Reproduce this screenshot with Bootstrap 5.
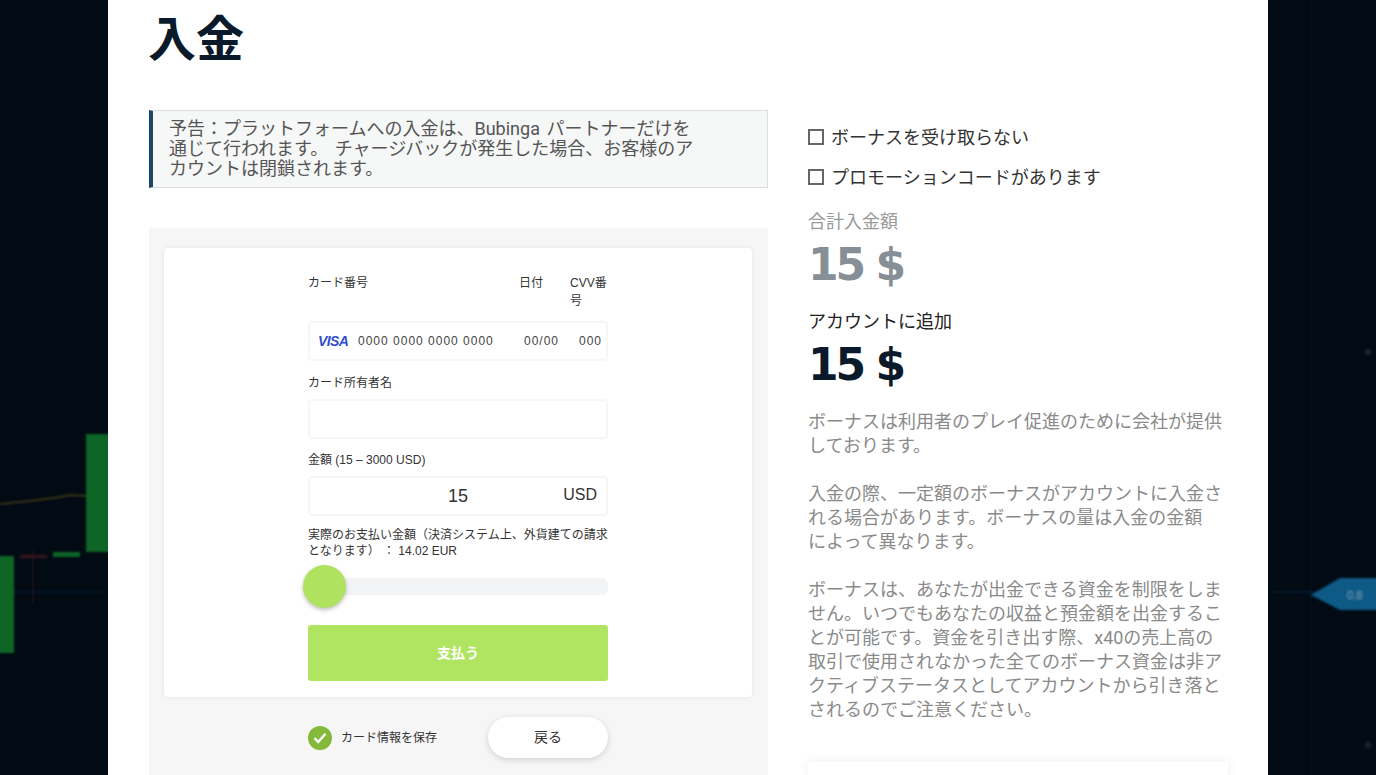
<!DOCTYPE html>
<html lang="ja">

<head>
  <meta charset="UTF-8">
  <title>入金</title>
  <link href="https://cdn.jsdelivr.net/npm/bootstrap@5.3.0/dist/css/bootstrap.min.css" rel="stylesheet">
  <style>
    html,
    body {
      height: 775px;
      overflow: hidden;
      background: #020a14;
      font-family: Roboto, "Noto Sans CJK JP", sans-serif;
    }

    .chart-bg {
      position: absolute;
      inset: 0;
      width: 1376px;
      height: 775px;
    }

    .page-panel {
      position: relative;
      width: 1160px;
      height: 775px;
      padding: 10px 40px 0 41px;
      background: #fff;
      overflow: hidden;
    }

    .page-title {
      height: 60px;
      margin: 0 0 40px -1px;
      font-size: 48px;
      line-height: 60px;
      font-weight: 700;
      color: #0b1a2b;
    }

    .left-col {
      width: 619px;
    }

    .right-col {
      width: 420px;
      padding-top: 7px;
    }

    .notice-box {
      height: 78px;
      margin-bottom: 40px;
      padding: 8px 16px 6px;
      background: #f6f7f7;
      border: 1px solid #dcdfe0;
      border-left: 4px solid #1f4468;
      font-size: 18px;
      line-height: 20px;
      word-spacing: 2px;
      color: #555;
    }

    .pay-area {
      height: 547px;
      padding: 20px 16px 0 15px;
      background: #f6f6f6;
    }

    .pay-card {
      height: 449px;
      padding-top: 26px;
      background: #fff;
      border-radius: 4px;
      box-shadow: 0 0 4px rgba(0, 0, 0, .08);
    }

    .pay-form,
    .pay-footer {
      width: 300px;
      margin: 0 auto;
      font-family: "Liberation Sans", "Noto Sans CJK JP", sans-serif;
      font-size: 12px;
      line-height: 18px;
      color: #333;
    }

    .card-labels {
      height: 47px;
    }

    .label-number {
      width: 211px;
    }

    .label-date {
      width: 51px;
    }

    .label-cvv {
      width: 38px;
    }

    .field-box {
      height: 40px;
      background: #fff;
      border: 2px solid #f6f6f6;
      border-radius: 4px;
    }

    .card-field {
      padding-left: 8px;
      letter-spacing: 1px;
      color: #444;
      white-space: nowrap;
    }

    .visa-mark {
      width: 40px;
      font-size: 14px;
      font-weight: 700;
      font-style: italic;
      letter-spacing: -.6px;
      color: #2f50c8;
    }

    .card-digits {
      width: 166px;
    }

    .card-date {
      width: 55px;
    }

    .holder-label {
      margin: 13px 0 7px;
    }

    .amount-label {
      margin: 12px 0 7px;
    }

    .amount-field {
      padding-right: 9px;
      font-size: 16px;
      color: #333;
    }

    .amount-value {
      padding-left: 138px;
      font-size: 18px;
    }

    .amount-unit {
      margin-top: -2px;
    }

    .actual-pay {
      margin-top: 11px;
      line-height: 16px;
    }

    .range-wrap {
      position: relative;
      height: 17px;
      margin: 19px 0 30px;
      background: #f1f3f5;
      border-radius: 6px;
    }

    .range-thumb {
      position: absolute;
      left: -5px;
      top: -13px;
      width: 43px;
      height: 43px;
      border-radius: 50%;
      background: #aee25f;
      box-shadow: 0 2px 4px rgba(0, 0, 0, .25);
    }

    .pay-btn {
      display: block;
      width: 300px;
      height: 56px;
      padding: 0;
      background: #b0e561;
      border: 0;
      border-radius: 3px;
      color: #fff;
      font-size: 14px;
      font-weight: 700;
    }

    .pay-footer {
      height: 41px;
      margin-top: 20px;
    }

    .save-check {
      width: 24px;
      height: 24px;
      margin-right: 9px;
      border-radius: 50%;
      background: #84b93a;
    }

    .back-btn {
      width: 120px;
      height: 41px;
      padding: 0;
      background: #fff;
      border: 0;
      border-radius: 21px;
      box-shadow: 0 2px 6px rgba(0, 0, 0, .15);
      font-size: 14px;
      color: #333;
    }

    .option-row {
      height: 40px;
      font-size: 18px;
      color: #333;
    }

    .option-row .form-check-input {
      width: 16px;
      height: 16px;
      margin: 0 7px 0 0;
      border: 2px solid #666;
      border-radius: 0;
    }

    .sum-label {
      margin-top: 13px;
      font-size: 18px;
      line-height: 24px;
      color: #999;
    }

    .sum-value {
      height: 76px;
      padding-top: 3px;
      font-family: "DejaVu Sans", sans-serif;
      font-size: 44px;
      line-height: 56px;
      font-weight: 700;
      letter-spacing: -3px;
      color: #868e96;
    }

    .sum-label.is-dark {
      margin-top: 0;
      color: #222;
    }

    .sum-value.is-dark {
      color: #0b1a2b;
    }

    .bonus-text {
      margin-bottom: 24px;
      font-size: 18px;
      line-height: 24px;
      color: #8a8a8a;
    }

    .bonus-card {
      height: 13px;
      margin-top: 40px;
      background: #fff;
      box-shadow: 0 0 12px rgba(0, 0, 0, .08);
    }
  </style>
</head>

<body>
  <svg class="chart-bg" viewBox="0 0 1376 775">
    <defs>
      <filter id="soft">
        <feGaussianBlur stdDeviation="1.2"></feGaussianBlur>
      </filter>
    </defs>
    <g filter="url(#soft)">
      <line x1="1311" y1="0" x2="1311" y2="775" stroke="#0b141e" stroke-width="1"></line>
      <line x1="0" y1="592" x2="108" y2="592" stroke="#0c2036" stroke-width="1"></line>
      <line x1="1272" y1="592" x2="1320" y2="592" stroke="#0c2a44" stroke-width="1"></line>
      <polyline points="0,504 30,501 60,497 70,495 108,497" fill="none" stroke="#3a3418" stroke-width="2"></polyline>
      <rect x="86" y="434" width="24" height="118" fill="#0b6528"></rect>
      <rect x="-4" y="556" width="18" height="97" fill="#0b6528"></rect>
      <rect x="53" y="552" width="27" height="5" fill="#0b6528"></rect>
      <rect x="20" y="555" width="27" height="3" fill="#3a161c"></rect>
      <line x1="33" y1="550" x2="33" y2="605" stroke="#2e161c" stroke-width="1"></line>
      <polygon points="1311,595 1340,578 1380,578 1380,610 1340,610" fill="#0b5a86"></polygon>
      <text x="1347" y="599" font-family="Liberation Sans" font-size="11" fill="#6f9cb4">0.8</text>
      <circle cx="1368" cy="352" r="3.5" fill="#17212a"></circle>
      <circle cx="1368" cy="745" r="3.5" fill="#17212a"></circle>
    </g>
  </svg>

  <div class="page-panel mx-auto">
    <h1 class="page-title">入金</h1>
    <div class="d-flex justify-content-between">
      <div class="left-col flex-shrink-0">
        <div class="notice-box">予告：プラットフォームへの入金は、Bubinga パートナーだけを<br>通じて行われます。 チャージバックが発生した場合、お客様のア<br>カウントは閉鎖されます。</div>
        <div class="pay-area">
          <div class="pay-card">
            <div class="pay-form">
              <div class="card-labels d-flex">
                <div class="label-number">カード番号</div>
                <div class="label-date">日付</div>
                <div class="label-cvv">CVV番号</div>
              </div>
              <div class="field-box card-field d-flex align-items-center">
                <span class="visa-mark">VISA</span>
                <span class="card-digits">0000 0000 0000 0000</span>
                <span class="card-date">00/00</span>
                <span>000</span>
              </div>
              <div class="holder-label">カード所有者名</div>
              <div class="field-box"></div>
              <div class="amount-label">金額 (15 – 3000 USD)</div>
              <div class="field-box amount-field d-flex align-items-center justify-content-between">
                <span class="amount-value">15</span>
                <span class="amount-unit">USD</span>
              </div>
              <div class="actual-pay">実際のお支払い金額（決済システム上、外貨建ての請求となります） ： 14.02 EUR</div>
              <div class="range-wrap">
                <div class="range-thumb"></div>
              </div>
              <button type="button" class="btn pay-btn">支払う</button>
            </div>
          </div>
          <div class="pay-footer d-flex align-items-center">
            <span class="save-check d-flex align-items-center justify-content-center">
              <svg width="14" height="12" viewBox="0 0 14 12">
                <path d="M1.5 6.2 5.2 10 12.5 1.8" fill="none" stroke="#fff" stroke-width="2.4"></path>
              </svg>
            </span>
            <span>カード情報を保存</span>
            <button type="button" class="btn back-btn ms-auto">戻る</button>
          </div>
        </div>
      </div>
      <div class="right-col flex-shrink-0">
        <label class="option-row d-flex align-items-center">
          <input class="form-check-input" type="checkbox">ボーナスを受け取らない
        </label>
        <label class="option-row d-flex align-items-center">
          <input class="form-check-input" type="checkbox">プロモーションコードがあります
        </label>
        <div class="sum-label">合計入金額</div>
        <div class="sum-value">15 $</div>
        <div class="sum-label is-dark">アカウントに追加</div>
        <div class="sum-value is-dark">15 $</div>
        <p class="bonus-text">ボーナスは利用者のプレイ促進のために会社が提供しております。</p>
        <p class="bonus-text">入金の際、一定額のボーナスがアカウントに入金される場合があります。ボーナスの量は入金の金額<br>によって異なります。</p>
        <p class="bonus-text">ボーナスは、あなたが出金できる資金を制限をしません。いつでもあなたの収益と預金額を出金することが可能です。資金を引き出す際、x40の売上高の取引で使用されなかった全てのボーナス資金は非アクティブステータスとしてアカウントから引き落とされるのでご注意ください。</p>
        <div class="bonus-card"></div>
      </div>
    </div>
  </div>
  <script src="https://cdn.jsdelivr.net/npm/bootstrap@5.3.0/dist/js/bootstrap.bundle.min.js"></script>
</body>

</html>
